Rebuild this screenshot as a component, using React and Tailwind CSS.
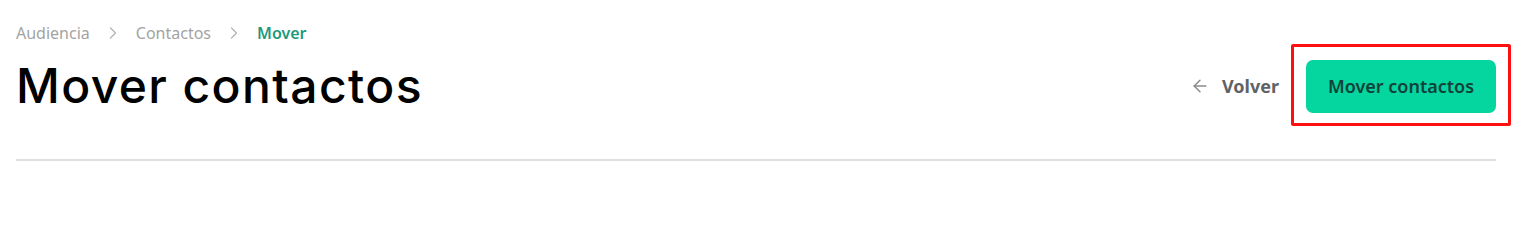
import { ArrowLeft, ChevronRight } from 'lucide-react'

const crumbs = [
  { label: 'Audiencia' },
  { label: 'Contactos' },
  { label: 'Mover', active: true },
]

export default function App() {
  return (
    <div className="w-[1538px] h-[240px] bg-white font-['Noto_Sans',sans-serif]">
      <div className="pl-4 pr-[42px] pt-[22px]">
        {/* Breadcrumb */}
        <nav className="flex items-center h-[22px] text-[16px]">
          {crumbs.map(({ label, active }, i) => (
            <div key={label} className="flex items-center">
              {i > 0 && (
                <ChevronRight className="w-[20px] h-[20px] mx-[13px] text-[#b5b5b5]" strokeWidth={1.5} />
              )}
              <span className={active ? 'text-[#1d9a7d] font-semibold' : 'text-[#a3a3a3]'}>{label}</span>
            </div>
          ))}
        </nav>

        {/* Header */}
        <div className="flex items-center justify-between mt-[10px]">
          <h1 className="text-[48px] leading-[64px] font-medium text-black tracking-[1.4px] font-['Inter',sans-serif]">
            Mover contactos
          </h1>
          <div className="flex items-center">
            <button className="flex items-center gap-[12px] text-[#5f6368] font-bold text-[18px] mr-[27px]">
              <ArrowLeft className="w-5 h-5 text-[#8a8a8a]" strokeWidth={1.75} />
              Volver
            </button>
            <div className="relative">
              <button className="w-[190px] h-[53px] rounded-[7px] bg-[#05d59e] text-[#11423a] font-semibold text-[18px]">
                Mover contactos
              </button>
              {/* highlight frame */}
              <span className="absolute -top-[16px] -bottom-[13px] -left-[15px] -right-[15px] border-[3px] border-[#ff1010] rounded-[2px] pointer-events-none" />
            </div>
          </div>
        </div>

        {/* Divider */}
        <div className="mt-[41px] h-[2px] bg-[#e0e0e0]" />
      </div>
    </div>
  )
}
